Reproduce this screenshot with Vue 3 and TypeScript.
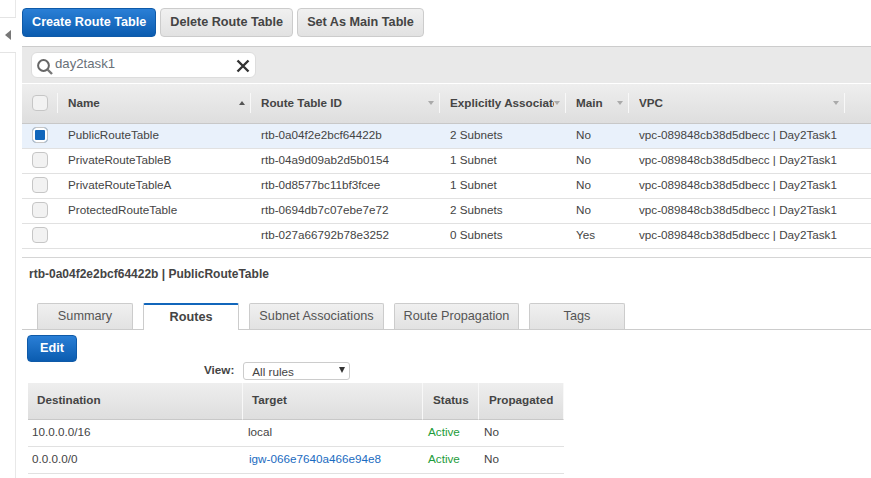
<script setup lang="ts">
interface RouteTable {
  name: string
  id: string
  assoc: string
  main: string
}

interface Route {
  dest: string
  target: string
  link: boolean
}

const vpc = 'vpc-089848cb38d5dbecc | Day2Task1'

const tables: RouteTable[] = [
  { name: 'PublicRouteTable', id: 'rtb-0a04f2e2bcf64422b', assoc: '2 Subnets', main: 'No' },
  { name: 'PrivateRouteTableB', id: 'rtb-04a9d09ab2d5b0154', assoc: '1 Subnet', main: 'No' },
  { name: 'PrivateRouteTableA', id: 'rtb-0d8577bc11bf3fcee', assoc: '1 Subnet', main: 'No' },
  { name: 'ProtectedRouteTable', id: 'rtb-0694db7c07ebe7e72', assoc: '2 Subnets', main: 'No' },
  { name: '', id: 'rtb-027a66792b78e3252', assoc: '0 Subnets', main: 'Yes' }
]

const columns = [
  { label: 'Name', up: true },
  { label: 'Route Table ID', up: false },
  { label: 'Explicitly Associated', up: false },
  { label: 'Main', up: false },
  { label: 'VPC', up: false }
]

const tabs = ['Summary', 'Routes', 'Subnet Associations', 'Route Propagation', 'Tags']

const routes: Route[] = [
  { dest: '10.0.0.0/16', target: 'local', link: false },
  { dest: '0.0.0.0/0', target: 'igw-066e7640a466e94e8', link: true }
]
</script>

<template>
  <div class="page">
    <aside class="rail">
      <div class="handle"><span class="handle-arrow"></span></div>
    </aside>
    <main class="content">
      <div class="actions">
        <button class="btn primary">Create Route Table</button>
        <button class="btn">Delete Route Table</button>
        <button class="btn">Set As Main Table</button>
      </div>

      <div class="filter-bar">
        <div class="search">
          <svg class="search-icon" width="18" height="18" viewBox="0 0 18 18">
            <circle cx="7.5" cy="7.5" r="5.4" fill="none" stroke="#666" stroke-width="2" />
            <path d="M11.5 11.5l4.5 4.5" stroke="#777" stroke-width="2.4" fill="none" />
          </svg>
          <span class="search-text">day2task1</span>
          <svg class="clear-icon" width="14" height="14" viewBox="0 0 14 14">
            <path d="M1.5 1.5l11 11M12.5 1.5l-11 11" stroke="#333" stroke-width="2.4" fill="none" />
          </svg>
        </div>
      </div>

      <div class="grid-row grid-head">
        <div class="cell check-cell"><span class="check"></span></div>
        <div v-for="col in columns" :key="col.label" class="cell head-cell">
          <span class="head-label">{{ col.label }}</span>
          <span class="sort" :class="{ up: col.up }"></span>
        </div>
      </div>
      <div
        v-for="(t, i) in tables"
        :key="t.id"
        class="grid-row body-row"
        :class="{ selected: i === 0 }"
      >
        <div class="cell check-cell">
          <span class="check" :class="{ on: i === 0 }"></span>
        </div>
        <div class="cell">{{ t.name }}</div>
        <div class="cell">{{ t.id }}</div>
        <div class="cell">{{ t.assoc }}</div>
        <div class="cell">{{ t.main }}</div>
        <div class="cell">{{ vpc }}</div>
      </div>

      <div class="detail">
        <h2 class="detail-title">rtb-0a04f2e2bcf64422b | PublicRouteTable</h2>
        <div class="tabs">
          <div
            v-for="tab in tabs"
            :key="tab"
            class="tab"
            :class="{ active: tab === 'Routes' }"
          >{{ tab }}</div>
        </div>
        <div class="routes-pane">
          <button class="btn primary edit">Edit</button>
          <div class="view-row">
            <span class="view-label">View:</span>
            <div class="select">All rules<span class="select-arrow"></span></div>
          </div>
          <div class="routes">
            <div class="r-head">Destination</div>
            <div class="r-head">Target</div>
            <div class="r-head">Status</div>
            <div class="r-head">Propagated</div>
            <template v-for="r in routes" :key="r.dest">
              <div class="r-cell first">{{ r.dest }}</div>
              <div class="r-cell" :class="{ link: r.link }">{{ r.target }}</div>
              <div class="r-cell active-text">Active</div>
              <div class="r-cell">No</div>
            </template>
          </div>
        </div>
      </div>
    </main>
  </div>
</template>

<style>
html,
body {
  margin: 0;
  background: #fff;
  overflow: hidden;
}
</style>

<style scoped>
.page {
  display: flex;
  width: 871px;
  height: 478px;
  overflow: hidden;
  font-family: "Liberation Sans", Arial, sans-serif;
  font-size: 11.7px;
  color: #444;
}

.rail {
  width: 15px;
  flex: none;
  border-right: 1px solid #e8e8e8;
  padding-top: 17px;
}

.handle {
  height: 36px;
  width: 16px;
  background: #fff;
  border-top: 1px solid #e4e4e4;
  border-bottom: 1px solid #e4e4e4;
  display: flex;
  align-items: center;
  padding-left: 5px;
  box-sizing: border-box;
}

.handle-arrow {
  border-style: solid;
  border-width: 5px 6px 5px 0;
  border-color: transparent #777 transparent transparent;
}

.content {
  flex: 1;
  min-width: 0;
  padding: 8px 0 0 6px;
}

.actions {
  display: flex;
  gap: 4px;
  height: 30px;
}

.btn {
  font: bold 12.65px "Liberation Sans", Arial, sans-serif;
  color: #444;
  height: 29px;
  padding: 0 9px 2px;
  border: 1px solid #ccc;
  border-radius: 4px;
  background: linear-gradient(#f0f0f0, #e2e2e2);
}

.btn.primary {
  color: #fff;
  border-color: #0f5aa8;
  background: linear-gradient(#2a7fd6, #0b5cb0);
}

.filter-bar {
  margin-top: 8px;
  height: 36px;
  background: #e9e9e9;
  border-top: 1px solid #ccc;
  border-bottom: 1px solid #fff;
  display: flex;
  align-items: center;
  padding-left: 9px;
}

.search {
  width: 225px;
  height: 26px;
  box-sizing: border-box;
  background: #fff;
  border: 1px solid #ddd;
  border-radius: 6px;
  display: flex;
  align-items: center;
  padding: 0 5px 0 4px;
  color: #687078;
  font-size: 13.2px;
}

.search-icon {
  flex: none;
  margin-top: 3px;
}

.search-text {
  flex: 1;
  margin: 0 0 4px 1px;
}

.clear-icon {
  flex: none;
  margin: 2px 0 0 0;
}

.grid-row {
  display: grid;
  grid-template-columns: 35px 193px 189px 126px 63px 217px 26px;
}

.grid-head {
  height: 37px;
  padding-bottom: 2px;
  background: linear-gradient(#eee, #dedede);
  border-bottom: 1px solid #c8c8c8;
  align-items: center;
  font-weight: bold;
}

.cell {
  padding-left: 11px;
  white-space: nowrap;
  overflow: hidden;
}

.check-cell {
  padding-left: 10px;
  display: flex;
}

.head-cell {
  display: flex;
  align-items: center;
  height: 20px;
  border-left: 1px solid #f8f8f8;
  padding-left: 10px;
  padding-right: 5px;
}

.grid-head .head-cell:last-child {
  border-right: 1px solid #f8f8f8;
}

.head-label {
  flex: 1;
  overflow: hidden;
}

.sort {
  flex: none;
  border-style: solid;
  border-width: 4px 3.5px 0;
  border-color: #aaa transparent transparent;
}

.sort.up {
  border-width: 0 3.5px 4px;
  border-color: transparent transparent #555;
}

.body-row {
  height: 22px;
  padding-bottom: 2px;
  line-height: 22px;
  border-bottom: 1px solid #e1e1e1;
  align-items: center;
}

.body-row.selected {
  background: #e9f1fb;
}

.check {
  display: block;
  width: 16px;
  height: 16px;
  box-sizing: border-box;
  border: 1px solid #c6c6c6;
  border-radius: 4px;
  background: #f2f2f2;
}

.check.on {
  background: #1166bb;
  box-shadow: inset 0 0 0 2px #fff;
}

.detail {
  margin-top: 8px;
  border-top: 1px solid #d5d5d5;
}

.detail-title {
  margin: 9px 0 0 7px;
  font-size: 12px;
  line-height: 15px;
  font-weight: bold;
}

.tabs {
  display: flex;
  gap: 10px;
  margin-top: 21px;
  padding-left: 15px;
  height: 26px;
  border-bottom: 1px solid #ccc;
}

.tab {
  width: 96px;
  box-sizing: border-box;
  height: 26px;
  line-height: 24px;
  text-align: center;
  font-size: 12.7px;
  color: #555;
  border: 1px solid #ccc;
  border-bottom: none;
  border-radius: 2px 2px 0 0;
  background: linear-gradient(#f0f0f0, #e2e2e2);
}

.tab:nth-child(3) {
  width: 135px;
}

.tab:nth-child(4) {
  width: 125px;
}

.tab.active {
  height: 27px;
  background: #fff;
  border-top: 2px solid #1166bb;
  font-weight: bold;
  color: #444;
}

.routes-pane {
  padding: 5px 0 0 5px;
}

.edit {
  display: block;
  height: 27px;
  width: 50px;
  padding: 0 0 2px;
}

.view-row {
  display: flex;
  align-items: flex-start;
  height: 19px;
  padding-left: 177px;
  gap: 9px;
}

.view-label {
  font-weight: bold;
  line-height: 15px;
}

.select {
  position: relative;
  width: 107px;
  height: 18px;
  box-sizing: border-box;
  line-height: 17px;
  padding-left: 8px;
  border: 1px solid #ccc;
  border-radius: 3px;
  background: #fff;
}

.select-arrow {
  position: absolute;
  right: 4px;
  top: 4px;
  border-style: solid;
  border-width: 6px 3px 0;
  border-color: #333 transparent transparent;
}

.routes {
  display: grid;
  grid-template-columns: 215px 180px 56px 85px;
  width: 536px;
  margin: 2px 0 0 1px;
}

.r-head {
  height: 36px;
  line-height: 34px;
  padding-left: 9px;
  font-weight: bold;
  background: linear-gradient(#eee, #dedede);
  border-bottom: 1px solid #c8c8c8;
  border-right: 1px solid #f8f8f8;
}

.r-head:nth-child(n + 3) {
  padding-left: 10px;
}

.r-cell {
  height: 26px;
  line-height: 24px;
  padding-left: 5px;
  border-bottom: 1px solid #e1e1e1;
}

.r-cell.first {
  padding-left: 4px;
}

.r-cell.link {
  padding-left: 6px;
  color: #1a6bbf;
}

.active-text {
  color: #1d9c3a;
}
</style>
